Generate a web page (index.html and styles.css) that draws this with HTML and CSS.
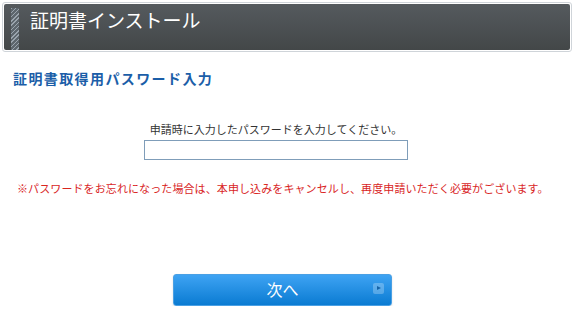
FILE: index.html
```html
<!DOCTYPE html>
<html lang="ja">
<head>
    <meta charset="UTF-8">
    <title>証明書インストール</title>
    <link rel="stylesheet" href="styles.css">
</head>
<body>
    <div class="header">
        <div class="header-inner">
            <span class="stripe"></span>
            <h1>証明書インストール</h1>
        </div>
    </div>

    <h2 class="section-title">証明書取得用パスワード入力</h2>

    <div class="form">
        <p class="guide">申請時に入力したパスワードを入力してください。</p>
        <input type="password" class="password-input">
    </div>

    <p class="note">※パスワードをお忘れになった場合は、本申し込みをキャンセルし、再度申請いただく必要がございます。</p>

    <div class="actions">
        <button class="next-button">次へ<span class="arrow"></span></button>
    </div>
</body>
</html>
```

FILE: styles.css
```css
body {
    margin: 0;
    font-family: "Noto Sans CJK JP", "Noto Sans", sans-serif;
    background-color: #fff;
    color: #333;
}

.header {
    margin: 2px 6px 0 2px;
    padding: 1px;
    border: 1px solid #cfd4d9;
    border-radius: 3px;
}

.header-inner {
    height: 46px;
    display: flex;
    background: linear-gradient(#555a5e, #434748);
    border-radius: 2px;
}

.stripe {
    width: 8px;
    margin: 4px 0 0 7px;
    background: repeating-linear-gradient(135deg, #9aa4ad 0 1px, #5d666d 1px 3px);
}

.header h1 {
    margin: 0 0 0 11px;
    padding-top: 4px;
    font-size: 19px;
    font-weight: normal;
    line-height: 24px;
    color: #fff;
}

.section-title {
    margin: 18px 0 0 13px;
    font-size: 14px;
    line-height: 16px;
    letter-spacing: 1.4px;
    color: #1b5ea8;
}

.form {
    width: 552px;
    margin-top: 36px;
    text-align: center;
}

.guide {
    margin: 0;
    font-size: 11px;
    line-height: 14px;
}

.password-input {
    display: block;
    box-sizing: border-box;
    width: 264px;
    height: 20px;
    margin: 4px auto 0;
    border: 1px solid #7f9db9;
    padding: 0 2px;
}

.note {
    margin: 21px 0 0 17px;
    font-size: 11px;
    line-height: 14px;
    letter-spacing: 0.1px;
    color: #d9261f;
}

.actions {
    margin: 79px 0 0 173px;
}

.next-button {
    position: relative;
    width: 219px;
    height: 32px;
    border: 1px solid #4aa0e4;
    border-radius: 3px;
    background: linear-gradient(#3ea3f3, #0a7bd2);
    box-shadow: 0 1px 2px rgba(0, 0, 0, 0.15);
    color: #fff;
    font-family: inherit;
    font-size: 16px;
    padding: 0 0 2px 0;
    cursor: pointer;
}

.arrow {
    position: absolute;
    right: 7px;
    top: 8px;
    width: 11px;
    height: 11px;
    border-radius: 2px;
    background-color: rgba(255, 255, 255, 0.25);
}

.arrow::after {
    content: "";
    position: absolute;
    left: 4px;
    top: 3px;
    border-left: 4px solid #1463a8;
    border-top: 2.5px solid transparent;
    border-bottom: 2.5px solid transparent;
}
```
